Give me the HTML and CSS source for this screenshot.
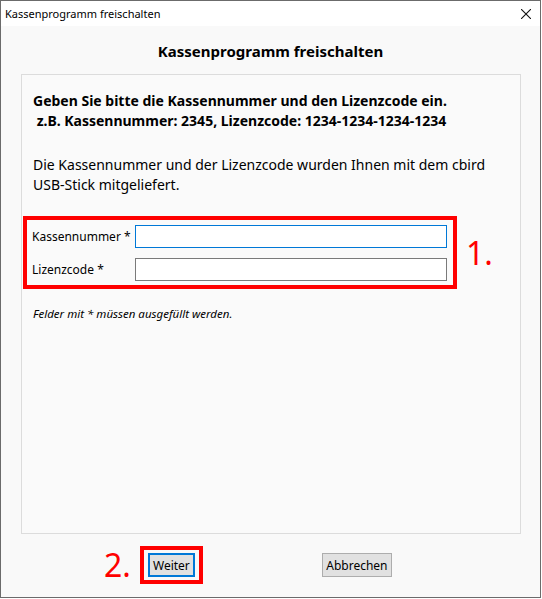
FILE: index.html
```html
<!DOCTYPE html>
<html lang="de">
<head>
  <meta charset="UTF-8">
  <title>Kassenprogramm freischalten</title>
  <link rel="stylesheet" href="styles.css">
</head>
<body>
  <div class="window">
    <div class="titlebar">
      <span class="title">Kassenprogramm freischalten</span>
      <svg class="close" width="10" height="10" viewBox="0 0 10 10">
        <path d="M0 0 L10 10 M10 0 L0 10" stroke="#111" stroke-width="1.1" fill="none" />
      </svg>
    </div>

    <div class="content">
      <h1 class="heading">Kassenprogramm freischalten</h1>

      <div class="panel">
        <p class="intro bold">Geben Sie bitte die Kassennummer und den Lizenzcode ein.<br>&nbsp;z.B. Kassennummer: 2345, Lizenzcode: 1234-1234-1234-1234</p>
        <p class="intro">Die Kassennummer und der Lizenzcode wurden Ihnen mit dem cbird USB-Stick mitgeliefert.</p>

        <div class="step-row">
          <div class="marked fields">
            <div class="field">
              <label for="kasse">Kassennummer *</label>
              <input id="kasse" class="focused" type="text">
            </div>
            <div class="field">
              <label for="lizenz">Lizenzcode *</label>
              <input id="lizenz" type="text">
            </div>
          </div>
          <span class="step">1.</span>
        </div>

        <p class="note">Felder mit * müssen ausgefüllt werden.</p>
      </div>

      <div class="buttons">
        <span class="step">2.</span>
        <div class="marked">
          <button class="btn default">Weiter</button>
        </div>
        <button class="btn cancel">Abbrechen</button>
      </div>
    </div>
  </div>
</body>
</html>
```

FILE: styles.css
```css
html, body {
  margin: 0;
  padding: 0;
  background: #fff;
}
body {
  font-family: "Noto Sans", "Open Sans", sans-serif;
  color: #000;
}
.window {
  width: 539px;
  height: 596px;
  border: 1px solid #6b6b6b;
  display: flex;
  flex-direction: column;
  background: #f9f9f9;
  overflow: hidden;
}
.titlebar {
  flex-shrink: 0;
  height: 25px;
  background: #fff;
  display: flex;
  align-items: center;
  justify-content: space-between;
  padding: 0 9px 0 4px;
}
.title {
  font-size: 11px;
}
.close {
  display: block;
}
.content {
  flex: 1;
  display: flex;
  flex-direction: column;
}
.heading {
  margin: 15px 0 13px;
  font-size: 15px;
  line-height: 20px;
  font-weight: bold;
  text-align: center;
}
.panel {
  margin-left: 20px;
  width: 497px;
  height: 442px;
  border: 1px solid #dcdcdc;
  background: #fafafa;
  padding: 16px 0 0 1px;
}
.intro {
  margin: 0 0 24px;
  padding-left: 10px;
  font-size: 14px;
  line-height: 20px;
}
.intro.bold {
  font-weight: bold;
}
.intro + .intro {
  margin-bottom: 21px;
}
.step-row {
  display: flex;
  align-items: center;
  gap: 9px;
}
.marked {
  border: 4px solid #f00;
}
.fields {
  width: 415px;
  padding: 5px 6px 4px 5px;
  display: flex;
  flex-direction: column;
  gap: 10px;
}
.field {
  display: flex;
  align-items: center;
  font-size: 12px;
}
.field label {
  width: 103px;
}
.field input {
  width: 312px;
  height: 23px;
  box-sizing: border-box;
  border: 1px solid #7a7a7a;
  background: #fff;
  margin: 0;
  outline: none;
}
.field input.focused {
  border-color: #0078d7;
}
.step {
  color: #f00;
  font-size: 32px;
  line-height: 32px;
}
.note {
  margin: 17px 0 0;
  padding-left: 10px;
  font-size: 11.5px;
  line-height: 15px;
  font-style: italic;
}
.buttons {
  display: flex;
  align-items: center;
  padding: 12px 0 0 103px;
}
.buttons .step {
  margin-right: 9px;
}
.buttons .marked {
  padding: 3px 4px;
  margin-right: 119px;
}
.btn {
  font-family: inherit;
  font-size: 12px;
  color: #000;
  background: #e1e1e1;
  border: 1px solid #adadad;
  height: 24px;
  padding: 0;
  margin: 0;
  display: block;
}
.btn.default {
  border: 2px solid #0078d7;
  width: 47px;
}
.btn.cancel {
  width: 70px;
}
```
